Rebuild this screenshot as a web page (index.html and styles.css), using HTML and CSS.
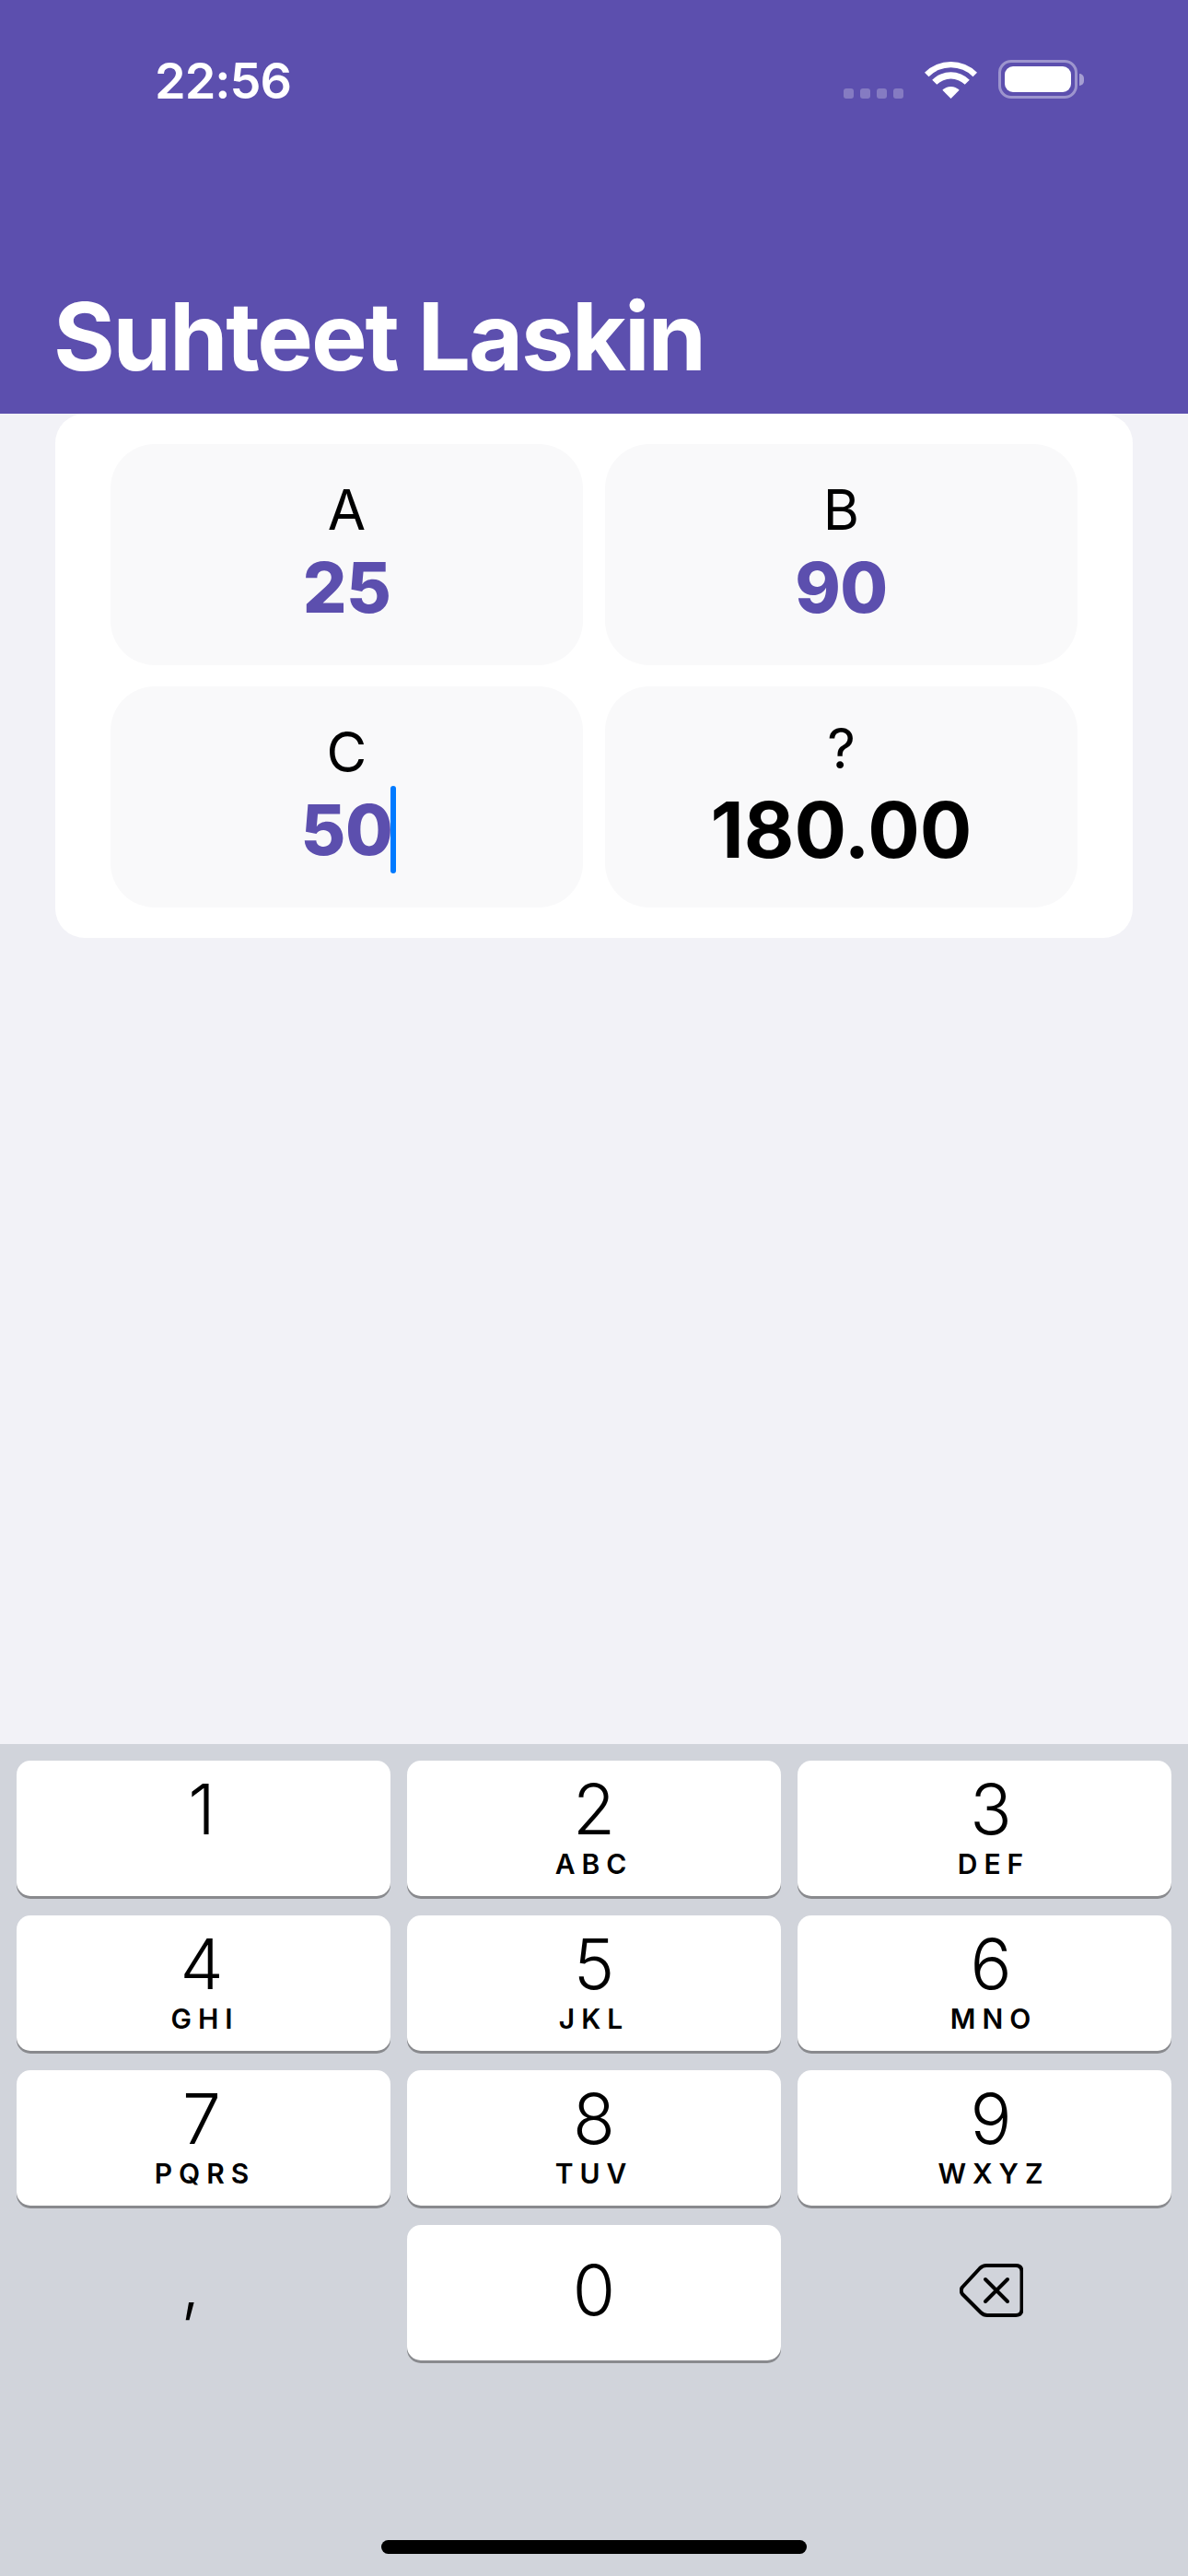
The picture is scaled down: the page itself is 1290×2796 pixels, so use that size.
FILE: index.html
```html
<!DOCTYPE html>
<html lang="en">
<head>
    <meta charset="UTF-8">
    <meta name="viewport" content="width=device-width, initial-scale=1.0">
    <title>Suhteet Laskin</title>
    <link rel="stylesheet" href="styles.css">
</head>
<body>
    <header class="app-header">
        <div class="status-bar">
            <span class="status-time">22:56</span>
            <div class="status-icons">
                <div class="signal-dots">
                    <span></span><span></span><span></span><span></span>
                </div>
                <svg class="wifi-icon" width="57" height="41" viewBox="0 0 57 41">
                    <path d="M0 12.7A40.3 40.3 0 0 1 57 12.7L52.5 17.2A34 34 0 0 0 4.5 17.2Z"/>
                    <path d="M8.2 20.7A28.7 28.7 0 0 1 48.8 20.7L43.7 25.8A21.5 21.5 0 0 0 13.3 25.8Z"/>
                    <path d="M19.3 31.8A13 13 0 0 1 37.7 31.8L28.5 41Z"/>
                </svg>
                <div class="battery">
                    <div class="battery-body"><div class="battery-level"></div></div>
                    <div class="battery-nub"></div>
                </div>
            </div>
        </div>
        <h1 class="app-title">Suhteet Laskin</h1>
    </header>

    <main class="content">
        <section class="calc-card">
            <div class="tile">
                <span class="tile-label">A</span>
                <span class="tile-value">25</span>
            </div>
            <div class="tile">
                <span class="tile-label">B</span>
                <span class="tile-value">90</span>
            </div>
            <div class="tile">
                <span class="tile-label">C</span>
                <span class="tile-value has-caret">50</span>
            </div>
            <div class="tile">
                <span class="tile-label">?</span>
                <span class="tile-result">180.00</span>
            </div>
        </section>
    </main>

    <div class="keyboard">
        <div class="key-grid">
            <div class="key"><span class="key-digit">1</span></div>
            <div class="key"><span class="key-digit">2</span><span class="key-letters">ABC</span></div>
            <div class="key"><span class="key-digit">3</span><span class="key-letters">DEF</span></div>
            <div class="key"><span class="key-digit">4</span><span class="key-letters">GHI</span></div>
            <div class="key"><span class="key-digit">5</span><span class="key-letters">JKL</span></div>
            <div class="key"><span class="key-digit">6</span><span class="key-letters">MNO</span></div>
            <div class="key"><span class="key-digit">7</span><span class="key-letters">PQRS</span></div>
            <div class="key"><span class="key-digit">8</span><span class="key-letters">TUV</span></div>
            <div class="key"><span class="key-digit">9</span><span class="key-letters">WXYZ</span></div>
            <div class="key key-plain"><span class="key-comma">,</span></div>
            <div class="key key-zero"><span class="key-digit">0</span></div>
            <div class="key key-plain">
                <svg class="backspace-icon" width="69" height="58" viewBox="0 0 69 58">
                    <path d="M3 33Q0.5 29 3 25.5L22 5Q25 2 29 2H61Q67.5 2 67.5 8.5V49.5Q67.5 56 61 56H30Q26 56 23 53Z" fill="none" stroke="#000" stroke-width="4" stroke-linejoin="round"/>
                    <path d="M28 17L52 41M52 17L28 41" fill="none" stroke="#000" stroke-width="4" stroke-linecap="round"/>
                </svg>
            </div>
        </div>
        <div class="home-indicator"></div>
    </div>
</body>
</html>
```

FILE: styles.css
```css
:root {
    --primary-color: #5c4fae;
    --background-light: #f2f2f7;
    --tile-color: #f9f9fa;
    --keyboard-color: #d1d4db;
    --caret-color: #007aff;
}

* {
    box-sizing: border-box;
}

body {
    margin: 0;
    height: 2796px;
    display: flex;
    flex-direction: column;
    font-family: Inter, "Liberation Sans", sans-serif;
    background-color: var(--background-light);
    color: #000;
}

/* header */
.app-header {
    height: 449px;
    padding: 0 58px;
    display: flex;
    flex-direction: column;
    justify-content: space-between;
    background-color: var(--primary-color);
    color: #fff;
}

.status-bar {
    display: flex;
    justify-content: space-between;
    align-items: flex-start;
    padding: 56px 55px 0 110px;
}

.status-time {
    font-size: 54px;
    line-height: 64px;
    font-weight: 600;
    letter-spacing: -1px;
}

.status-icons {
    display: flex;
    align-items: flex-end;
    padding-top: 9px;
}

.signal-dots {
    display: flex;
    gap: 7px;
    margin-right: 23px;
}

.signal-dots span {
    width: 11px;
    height: 11px;
    border-radius: 3px;
    background-color: rgba(255, 255, 255, 0.25);
}

.wifi-icon {
    display: block;
    fill: #fff;
    margin-right: 23px;
}

.battery {
    display: flex;
    align-items: center;
}

.battery-body {
    width: 86px;
    height: 42px;
    padding: 4px;
    border: 3px solid rgba(255, 255, 255, 0.4);
    border-radius: 14px;
}

.battery-level {
    height: 100%;
    border-radius: 9px;
    background-color: #fff;
}

.battery-nub {
    width: 5px;
    height: 13px;
    margin-left: 2px;
    border-radius: 0 5px 5px 0;
    background-color: rgba(255, 255, 255, 0.45);
}

.app-title {
    margin: 0 0 22px;
    font-size: 102px;
    line-height: 124px;
    font-weight: 700;
    letter-spacing: -2.2px;
}

/* card with the four values */
.content {
    flex: 1;
    padding: 0 60px;
}

.calc-card {
    display: grid;
    grid-template-columns: 1fr 1fr;
    grid-auto-rows: 240px;
    gap: 23px 24px;
    padding: 33px 60px;
    background-color: #fff;
    border-radius: 32px;
}

.tile {
    display: flex;
    flex-direction: column;
    align-items: center;
    justify-content: center;
    padding-bottom: 3px;
    background-color: var(--tile-color);
    border-radius: 48px;
}

.tile-label {
    margin-bottom: 3px;
    font-size: 60px;
    line-height: 72px;
}

.tile-value {
    position: relative;
    font-size: 75px;
    line-height: 92px;
    font-weight: 800;
    letter-spacing: -0.5px;
    color: var(--primary-color);
}

.tile-result {
    font-size: 84px;
    line-height: 100px;
    font-weight: 700;
}

/* text cursor in the active field */
.has-caret::after {
    content: "";
    position: absolute;
    left: calc(100% - 2px);
    top: -2px;
    width: 6px;
    height: 95px;
    border-radius: 3px;
    background-color: var(--caret-color);
}

/* number pad */
.keyboard {
    height: 903px;
    padding: 18px 18px 24px;
    display: flex;
    flex-direction: column;
    background-color: var(--keyboard-color);
}

.key-grid {
    display: grid;
    grid-template-columns: repeat(3, 1fr);
    grid-auto-rows: 147px;
    gap: 21px 18px;
}

.key {
    display: flex;
    flex-direction: column;
    align-items: center;
    background-color: #fff;
    border-radius: 15px;
    box-shadow: 0 3px 0 #898a8e;
}

.key:nth-child(3n+1) .key-digit {
    margin-right: 4px;
}

.key:nth-child(3n+1) .key-letters {
    margin-left: 3px;
}

.key:nth-child(3n) {
    padding-left: 14px;
}

.key:nth-child(3n) .key-letters {
    margin-left: 6px;
}

.key-plain {
    justify-content: center;
    background-color: transparent;
    box-shadow: none;
}

.key-zero {
    justify-content: center;
}

.key-zero .key-digit {
    margin-top: -6px;
}

.key-digit {
    margin-top: 13px;
    font-size: 75px;
    line-height: 80px;
    font-weight: 350;
}

.key-letters {
    margin-top: 2px;
    font-size: 30px;
    line-height: 34px;
    font-weight: 600;
    letter-spacing: 7px;
}

.key-comma {
    margin: 0 28px 20px 0;
    font-size: 75px;
    line-height: 80px;
    font-weight: 350;
}

.backspace-icon {
    margin-bottom: 6px;
}

.home-indicator {
    width: 462px;
    height: 15px;
    margin: auto auto 0;
    border-radius: 8px;
    background-color: #000;
}
```
